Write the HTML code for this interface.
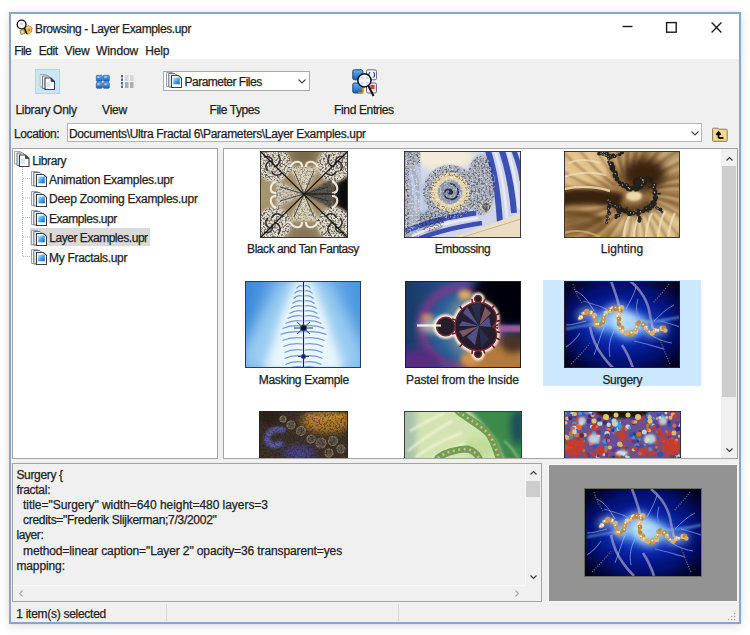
<!DOCTYPE html>
<html><head><meta charset="utf-8">
<style>
*{margin:0;padding:0;box-sizing:border-box}
html,body{width:750px;height:635px;overflow:hidden;background:#ffffff}
body{position:relative;font-family:"Liberation Sans",sans-serif;color:#1a1a1a}
.a{position:absolute}
.t{position:absolute;font-size:12px;line-height:12px;-webkit-text-stroke:0.25px #1e1e1e;white-space:nowrap;color:#1e1e1e}
svg{position:absolute;overflow:visible}
</style></head><body>
<!-- window shadow -->
<div class="a" style="left:9px;top:12px;width:732px;height:612px;box-shadow:0 2px 10px rgba(0,0,0,0.13),0 0 3px rgba(0,0,0,0.06)"></div>
<!-- window frame -->
<div class="a" style="left:9px;top:12px;width:732px;height:612px;background:#f0f0f0;border:2px solid #86a7c7"></div>
<!-- title+menu white -->
<div class="a" style="left:11px;top:14px;width:728px;height:45px;background:#ffffff"></div>
<!-- title controls -->
<svg style="left:622px;top:21px" width="12" height="12" viewBox="0 0 12 12"><path d="M0.5 5.5 H10.5" stroke="#1a1a1a" stroke-width="1.4"/></svg>
<svg style="left:665px;top:21px" width="13" height="13" viewBox="0 0 13 13"><rect x="1.6" y="1.6" width="9.6" height="9.6" fill="none" stroke="#1a1a1a" stroke-width="1.4"/></svg>
<svg style="left:711px;top:22px" width="11" height="11" viewBox="0 0 11 11"><path d="M0.6 0.6L10.4 10.4M10.4 0.6L0.6 10.4" stroke="#1a1a1a" stroke-width="1.35"/></svg>
<!-- library only button -->
<div class="a" style="left:35px;top:69px;width:25px;height:25px;background:#cce4f7;border:1px solid #b5d3ee"></div>
<!-- combobox -->
<div class="a" style="left:163px;top:71px;width:147px;height:20px;background:#fff;border:1px solid #a9a9a9"></div>
<svg style="left:298px;top:79px" width="8" height="5" viewBox="0 0 8 5"><path d="M0.5 0.5L4 4L7.5 0.5" fill="none" stroke="#444" stroke-width="1.1"/></svg>
<!-- location input -->
<div class="a" style="left:67px;top:123px;width:635px;height:19px;background:#fff;border:1px solid #b4b4b4"></div>
<svg style="left:691px;top:131px" width="8" height="5" viewBox="0 0 8 5"><path d="M0.5 0.5L4 4L7.5 0.5" fill="none" stroke="#444" stroke-width="1.1"/></svg>
<!-- tree panel -->
<div class="a" style="left:12px;top:148px;width:206px;height:311px;background:#fff;border:1px solid #a3a3a3"></div>
<div class="a" style="left:30px;top:228px;width:120px;height:18px;background:#d9d9d9"></div>
<!-- grid panel -->
<div class="a" style="left:223px;top:148px;width:515px;height:311px;background:#fff;border:1px solid #a3a3a3"></div>
<div class="a" style="left:543px;top:280px;width:158px;height:106px;background:#cce8ff"></div>
<svg width="0" height="0" style="position:absolute;left:0;top:0">
<defs>
<filter id="b1" filterUnits="userSpaceOnUse" x="-30" y="-30" width="180" height="150"><feGaussianBlur stdDeviation="1"/></filter>
<filter id="b2" filterUnits="userSpaceOnUse" x="-30" y="-30" width="180" height="150"><feGaussianBlur stdDeviation="2"/></filter>
<filter id="b3" filterUnits="userSpaceOnUse" x="-30" y="-30" width="180" height="150"><feGaussianBlur stdDeviation="3.5"/></filter>
<filter id="b5" filterUnits="userSpaceOnUse" x="-30" y="-30" width="180" height="150"><feGaussianBlur stdDeviation="5"/></filter>
<filter id="b8" filterUnits="userSpaceOnUse" x="-30" y="-30" width="180" height="150"><feGaussianBlur stdDeviation="8"/></filter>
<filter id="b05" filterUnits="userSpaceOnUse" x="-30" y="-30" width="180" height="150"><feGaussianBlur stdDeviation="0.5"/></filter>
<!-- dark speckle texture: output dark dots with alpha from noise, clipped to source alpha -->
<filter id="spk" x="0" y="0" width="100%" height="100%" color-interpolation-filters="sRGB">
 <feTurbulence type="fractalNoise" baseFrequency="0.55" numOctaves="2" seed="7" result="n"/>
 <feColorMatrix in="n" type="matrix" values="0 0 0 0 0.1  0 0 0 0 0.1  0 0 0 0 0.12  5 0 0 0 -2.3" result="d"/>
 <feComposite in="d" in2="SourceGraphic" operator="in"/>
</filter>
<filter id="spkL" x="0" y="0" width="100%" height="100%" color-interpolation-filters="sRGB">
 <feTurbulence type="fractalNoise" baseFrequency="0.5" numOctaves="2" seed="11" result="n"/>
 <feColorMatrix in="n" type="matrix" values="0 0 0 0 1  0 0 0 0 1  0 0 0 0 0.96  0 5 0 0 -2.4" result="d"/>
 <feComposite in="d" in2="SourceGraphic" operator="in"/>
</filter>
<radialGradient id="gSurg" cx="50%" cy="50%" r="65%">
 <stop offset="0" stop-color="#1038c0"/><stop offset="0.4" stop-color="#061c9c"/><stop offset="0.7" stop-color="#031070"/><stop offset="0.88" stop-color="#02063c"/><stop offset="1" stop-color="#000220"/>
</radialGradient>
<linearGradient id="gMaskH" x1="0" y1="0" x2="1" y2="0">
 <stop offset="0" stop-color="#3a88d8"/><stop offset="0.5" stop-color="#6ab0ea"/><stop offset="1" stop-color="#4a96de"/>
</linearGradient>

<symbol id="surg" viewBox="0 0 116 87">
 <rect width="116" height="87" fill="url(#gSurg)"/>
 <ellipse cx="60" cy="44" rx="44" ry="17" fill="#1a50d8" opacity="0.5" filter="url(#b8)"/>
 <ellipse cx="58" cy="42" rx="26" ry="11" fill="#78c0f8" opacity="0.75" filter="url(#b5)"/>
 <ellipse cx="60" cy="40" rx="14" ry="10" fill="#c8ecff" opacity="0.8" filter="url(#b3)"/>
 <path d="M2 48 C20 44 40 42 58 42 C80 42 100 40 116 36" stroke="#80c4ff" stroke-width="2.5" fill="none" opacity="0.55" filter="url(#b1)"/>
 <g fill="none" stroke="#8e90c4" stroke-width="2.6" opacity="0.8" filter="url(#b05)">
  <path d="M47 0 C50 8 53 16 55 25"/>
  <path d="M66 0 C76 8 84 20 86 34 C87 40 88 44 89 48"/>
  <path d="M26 46 C28 56 32 66 38 74 C42 80 46 84 49 87"/>
  <path d="M58 64 C62 70 66 78 69 87"/>
 </g>
 <g fill="none" stroke="#a8c8f8" stroke-width="1" opacity="0.6">
  <path d="M30 30 C24 20 20 14 12 10"/><path d="M40 46 C36 56 34 64 30 74"/><path d="M62 28 C66 20 70 14 72 6"/><path d="M80 48 C88 56 96 60 108 62"/><path d="M50 50 C46 58 44 66 46 76"/><path d="M90 40 C96 34 102 28 110 24"/><path d="M22 40 C14 42 8 44 2 44"/>
 </g>
 <g fill="none" stroke="#7e92d8" stroke-width="1.2" opacity="0.7">
  <path d="M19 20 C26 22 32 24 38 26 C42 28 46 30 50 34"/>
  <path d="M70 60 C80 62 92 66 100 68"/>
  <path d="M16 52 C12 58 8 62 2 66"/>
  <path d="M96 40 C104 42 110 44 116 46"/>
  <path d="M74 18 C72 24 72 30 74 36"/>
 </g>
 <g fill="none" stroke="#8a7a70" stroke-width="1.2" stroke-dasharray="1.2 1.3" opacity="0.85">
  <path d="M9 3 C11 10 14 16 18 22"/><path d="M105 3 C100 10 94 16 89 22"/>
  <path d="M7 83 C14 76 20 70 26 62"/><path d="M106 83 C102 74 99 66 96 59"/>
 </g>
 <path d="M15.5 38 C19 32 23 30 26 31.5 C30 34 32 42 34 44 C37 46 40 38 43 32 C46 28 52 26 57 27 C58 32 52 36 54 39 C57 44 57 50 60 52 C64 55 69 54 71 50 C73 46 73 42 76 42 C80 42 81 46 84 50 C87 53 92 50 96 48 L103 49" fill="none" stroke="#d8f0ff" stroke-width="10" opacity="0.5" filter="url(#b3)"/>
 
 <g><circle cx="15.4" cy="37.7" r="1.8" fill="#c89a50"/><circle cx="16.9" cy="36.4" r="2.4" fill="#e0c088"/><circle cx="18.9" cy="32.5" r="1.7" fill="#d8b070"/><circle cx="21.6" cy="31.7" r="2.5" fill="#c89a50"/><circle cx="22.9" cy="30.4" r="2.6" fill="#c89a50"/><circle cx="27.0" cy="31.3" r="2.0" fill="#c89a50"/><circle cx="26.8" cy="32.9" r="2.2" fill="#c89a50"/><circle cx="30.5" cy="34.2" r="2.5" fill="#d8b070"/><circle cx="30.0" cy="36.8" r="1.7" fill="#c89a50"/><circle cx="31.2" cy="39.4" r="1.8" fill="#c89a50"/><circle cx="32.1" cy="43.6" r="2.5" fill="#c89a50"/><circle cx="33.9" cy="43.7" r="2.8" fill="#c89a50"/><circle cx="36.4" cy="43.4" r="1.7" fill="#b88840"/><circle cx="38.6" cy="41.2" r="2.4" fill="#b88840"/><circle cx="39.3" cy="37.5" r="2.7" fill="#c89a50"/><circle cx="40.6" cy="34.4" r="1.9" fill="#c89a50"/><circle cx="41.9" cy="31.7" r="2.3" fill="#e0c088"/><circle cx="45.3" cy="30.0" r="1.9" fill="#e0c088"/><circle cx="46.0" cy="28.2" r="2.4" fill="#b88840"/><circle cx="48.7" cy="26.8" r="1.7" fill="#d8b070"/><circle cx="51.5" cy="27.2" r="2.8" fill="#b88840"/><circle cx="55.5" cy="27.3" r="2.0" fill="#c89a50"/><circle cx="57.6" cy="26.7" r="2.7" fill="#d8b070"/><circle cx="56.4" cy="29.7" r="2.3" fill="#b88840"/><circle cx="55.4" cy="32.0" r="1.7" fill="#d8b070"/><circle cx="54.4" cy="33.7" r="2.3" fill="#e0c088"/><circle cx="53.2" cy="35.5" r="2.4" fill="#e0c088"/><circle cx="55.0" cy="38.0" r="2.4" fill="#b88840"/><circle cx="54.3" cy="41.5" r="1.7" fill="#c89a50"/><circle cx="55.1" cy="43.5" r="2.2" fill="#b88840"/><circle cx="57.6" cy="46.9" r="2.7" fill="#c89a50"/><circle cx="56.8" cy="47.8" r="2.1" fill="#c89a50"/><circle cx="58.3" cy="50.3" r="2.3" fill="#e0c088"/><circle cx="62.7" cy="52.0" r="2.7" fill="#d8b070"/><circle cx="66.4" cy="54.5" r="1.7" fill="#b88840"/><circle cx="68.0" cy="52.1" r="2.8" fill="#c89a50"/><circle cx="71.6" cy="50.6" r="2.5" fill="#e0c088"/><circle cx="71.1" cy="48.9" r="1.7" fill="#c89a50"/><circle cx="72.7" cy="46.4" r="1.6" fill="#c89a50"/><circle cx="73.8" cy="42.7" r="2.6" fill="#c89a50"/><circle cx="75.1" cy="40.9" r="1.8" fill="#b88840"/><circle cx="79.5" cy="43.7" r="2.7" fill="#b88840"/><circle cx="79.4" cy="44.1" r="1.9" fill="#b88840"/><circle cx="81.8" cy="46.4" r="1.9" fill="#e0c088"/><circle cx="83.0" cy="48.6" r="1.7" fill="#c89a50"/><circle cx="85.3" cy="51.0" r="1.8" fill="#c89a50"/><circle cx="88.2" cy="52.2" r="2.5" fill="#d8b070"/><circle cx="91.3" cy="49.5" r="2.4" fill="#e0c088"/><circle cx="93.7" cy="49.6" r="1.7" fill="#c89a50"/><circle cx="93.8" cy="49.5" r="1.7" fill="#d8b070"/><circle cx="98.1" cy="47.4" r="2.6" fill="#e0c088"/><circle cx="99.9" cy="46.9" r="2.4" fill="#b88840"/><circle cx="101.3" cy="49.5" r="2.3" fill="#d8b070"/></g><g opacity="0.9"><circle cx="15.4" cy="37.1" r="0.9" fill="#fffbe8"/><circle cx="17.6" cy="35.8" r="1.1" fill="#fffbe8"/><circle cx="19.6" cy="31.9" r="0.9" fill="#fffbe8"/><circle cx="27.6" cy="30.7" r="1.0" fill="#fffbe8"/><circle cx="27.2" cy="32.3" r="1.0" fill="#fffbe8"/><circle cx="30.2" cy="36.2" r="0.9" fill="#fffbe8"/><circle cx="32.2" cy="43.0" r="0.9" fill="#fffbe8"/><circle cx="34.2" cy="43.1" r="1.1" fill="#fffbe8"/><circle cx="39.2" cy="40.6" r="0.8" fill="#fffbe8"/><circle cx="39.5" cy="36.9" r="0.6" fill="#fffbe8"/><circle cx="40.2" cy="33.8" r="0.9" fill="#fffbe8"/><circle cx="42.3" cy="31.1" r="0.7" fill="#fffbe8"/><circle cx="46.0" cy="29.4" r="0.9" fill="#fffbe8"/><circle cx="46.7" cy="27.6" r="1.0" fill="#fffbe8"/><circle cx="48.0" cy="26.2" r="0.7" fill="#fffbe8"/><circle cx="51.5" cy="26.6" r="0.7" fill="#fffbe8"/><circle cx="55.5" cy="26.7" r="1.0" fill="#fffbe8"/><circle cx="55.7" cy="29.1" r="0.9" fill="#fffbe8"/><circle cx="54.5" cy="33.1" r="0.9" fill="#fffbe8"/><circle cx="53.2" cy="34.9" r="0.9" fill="#fffbe8"/><circle cx="54.5" cy="37.4" r="0.7" fill="#fffbe8"/><circle cx="56.0" cy="47.2" r="1.0" fill="#fffbe8"/><circle cx="58.8" cy="49.7" r="0.8" fill="#fffbe8"/><circle cx="67.4" cy="51.5" r="1.1" fill="#fffbe8"/><circle cx="71.2" cy="48.3" r="0.7" fill="#fffbe8"/><circle cx="72.5" cy="45.8" r="1.0" fill="#fffbe8"/><circle cx="79.2" cy="43.5" r="1.0" fill="#fffbe8"/><circle cx="82.5" cy="45.8" r="0.8" fill="#fffbe8"/><circle cx="83.1" cy="48.0" r="0.7" fill="#fffbe8"/><circle cx="85.2" cy="50.4" r="0.9" fill="#fffbe8"/><circle cx="91.9" cy="48.9" r="0.8" fill="#fffbe8"/><circle cx="93.7" cy="49.0" r="0.6" fill="#fffbe8"/><circle cx="94.1" cy="48.9" r="0.9" fill="#fffbe8"/></g>
</symbol>

<symbol id="pastel" viewBox="0 0 116 87">
 <linearGradient id="gPasL" x1="0" y1="0" x2="1" y2="0"><stop offset="0" stop-color="#173a68"/><stop offset="0.5" stop-color="#245a8c"/><stop offset="1" stop-color="#1a3060"/></linearGradient>
 <rect width="116" height="87" fill="url(#gPasL)"/>
 <circle cx="56" cy="46" r="39" fill="none" stroke="#8a3a90" stroke-width="9" opacity="0.85" filter="url(#b3)"/>
 <ellipse cx="12" cy="82" rx="24" ry="14" fill="#5a2a80" filter="url(#b5)"/>
 <ellipse cx="104" cy="16" rx="38" ry="30" fill="#06060e" filter="url(#b5)"/>
 <ellipse cx="92" cy="78" rx="38" ry="18" fill="#b47a3a" filter="url(#b5)"/>
 <ellipse cx="108" cy="62" rx="12" ry="10" fill="#4a3028" filter="url(#b3)"/>
 <rect x="82" y="44" width="36" height="7" fill="#9a5a9a" filter="url(#b1)"/>
 <circle cx="56" cy="46" r="33" fill="#2e66a0" opacity="0.75" filter="url(#b3)"/><ellipse cx="66" cy="45" rx="26" ry="30" fill="#e8c898" opacity="0.35" filter="url(#b5)"/>
 <ellipse cx="22" cy="36" rx="6" ry="4" fill="#d88a50" opacity="0.8" filter="url(#b2)"/>
 <ellipse cx="60" cy="14" rx="7" ry="5" fill="#e0a860" filter="url(#b2)"/>
 <ellipse cx="66" cy="78" rx="10" ry="7" fill="#d09050" filter="url(#b2)"/>
 <ellipse cx="30" cy="45" rx="16" ry="7" fill="#e8e0c8" opacity="0.7" filter="url(#b3)"/>
 <path d="M87.0 45.5 L87.1 45.5 L87.3 45.5 L87.6 45.7 L88.0 45.9 L88.6 46.2 L89.1 46.7 L89.7 47.4 L90.3 48.3 L90.8 49.3 L91.2 50.6 L91.5 52.0 L91.6 53.5 L91.5 55.2 L91.2 56.9 L90.5 58.7 L89.7 60.6 L88.5 62.3 L87.0 64.0 L85.2 65.5 L83.2 66.9 L81.0 68.0 L78.5 68.8 L75.9 69.4 L73.1 69.5 L70.3 69.3 L67.5 68.8 L64.7 67.8 L62.0 66.5 L59.4 64.8 L57.1 62.8 L55.0 60.4 L53.3 57.8 L51.9 54.9 L50.8 51.9 L50.2 48.7 L50.0 45.5 L50.2 42.3 L50.8 39.1 L51.9 36.1 L53.3 33.2 L55.0 30.6 L57.1 28.2 L59.4 26.2 L62.0 24.5 L64.7 23.2 L67.5 22.2 L70.3 21.7 L73.1 21.5 L75.9 21.6 L78.5 22.2 L81.0 23.0 L83.2 24.1 L85.2 25.5 L87.0 27.0 L88.5 28.7 L89.7 30.4 L90.5 32.3 L91.2 34.1 L91.5 35.8 L91.6 37.5 L91.5 39.0 L91.2 40.4 L90.8 41.7 L90.3 42.7 L89.7 43.6 L89.1 44.3 L88.6 44.8 L88.0 45.1 L87.6 45.3 L87.3 45.5 L87.1 45.5 L87.0 45.5Z M31.5 45.5 a9.2 9.2 0 1 0 18.5 0 a9.2 9.2 0 1 0 -18.5 0Z M69.6 18.0 a3.5 3.5 0 1 0 7.0 0 a3.5 3.5 0 1 0 -7.0 0Z M69.6 73.0 a3.5 3.5 0 1 0 7.0 0 a3.5 3.5 0 1 0 -7.0 0Z" fill="#f4e6c0" stroke="#fbf2dc" stroke-width="6" stroke-linejoin="round" filter="url(#b1)"/>
 <path d="M87.3 45.5 l4.0 0.0 M89.1 46.7 l4.0 0.3 M91.2 50.6 l3.9 0.9 M91.2 56.9 l3.5 1.9 M87.0 64.0 l2.7 3.0 M78.5 68.8 l1.3 3.8 M67.5 68.8 l-0.5 4.0 M57.1 62.8 l-2.4 3.2 M50.8 51.9 l-3.8 1.2 M50.8 39.1 l-3.8 -1.2 M57.1 28.2 l-2.4 -3.2 M67.5 22.2 l-0.5 -4.0 M78.5 22.2 l1.3 -3.8 M87.0 27.0 l2.7 -3.0 M91.2 34.1 l3.5 -1.9 M91.2 40.4 l3.9 -0.9 M89.1 44.3 l4.0 -0.3 M87.3 45.5 l4.0 -0.0" stroke="#6a1a24" stroke-width="1.6"/>
 <path d="M87.0 45.5 L87.1 45.5 L87.3 45.5 L87.6 45.7 L88.0 45.9 L88.6 46.2 L89.1 46.7 L89.7 47.4 L90.3 48.3 L90.8 49.3 L91.2 50.6 L91.5 52.0 L91.6 53.5 L91.5 55.2 L91.2 56.9 L90.5 58.7 L89.7 60.6 L88.5 62.3 L87.0 64.0 L85.2 65.5 L83.2 66.9 L81.0 68.0 L78.5 68.8 L75.9 69.4 L73.1 69.5 L70.3 69.3 L67.5 68.8 L64.7 67.8 L62.0 66.5 L59.4 64.8 L57.1 62.8 L55.0 60.4 L53.3 57.8 L51.9 54.9 L50.8 51.9 L50.2 48.7 L50.0 45.5 L50.2 42.3 L50.8 39.1 L51.9 36.1 L53.3 33.2 L55.0 30.6 L57.1 28.2 L59.4 26.2 L62.0 24.5 L64.7 23.2 L67.5 22.2 L70.3 21.7 L73.1 21.5 L75.9 21.6 L78.5 22.2 L81.0 23.0 L83.2 24.1 L85.2 25.5 L87.0 27.0 L88.5 28.7 L89.7 30.4 L90.5 32.3 L91.2 34.1 L91.5 35.8 L91.6 37.5 L91.5 39.0 L91.2 40.4 L90.8 41.7 L90.3 42.7 L89.7 43.6 L89.1 44.3 L88.6 44.8 L88.0 45.1 L87.6 45.3 L87.3 45.5 L87.1 45.5 L87.0 45.5Z M31.5 45.5 a9.2 9.2 0 1 0 18.5 0 a9.2 9.2 0 1 0 -18.5 0Z M69.6 18.0 a3.5 3.5 0 1 0 7.0 0 a3.5 3.5 0 1 0 -7.0 0Z M69.6 73.0 a3.5 3.5 0 1 0 7.0 0 a3.5 3.5 0 1 0 -7.0 0Z" fill="#251c2c" stroke="#7a2a30" stroke-width="1.4"/>
 <path d="M74 45 L58 32 L62 26 Z M74 45 L84 36 L86 46 Z M74 45 L62 56 L70 64 Z M74 45 L54 45 L57 40Z" fill="#5a5a98" opacity="0.85"/><path d="M74 45 L80 26 L86 32Z M74 45 L54 50 L58 56Z" fill="#a07078" opacity="0.7"/>
 <path d="M74 45 L66 24 L76 22Z M74 45 L84 58 L76 66Z" fill="#2a3050" opacity="0.9"/>
<path d="M12 44.5 L36 44.5" stroke="#fbf6ea" stroke-width="2.2" opacity="0.95"/></symbol>

<symbol id="mask" viewBox="0 0 116 87">
 <rect width="116" height="87" fill="url(#gMaskH)"/>
 <path d="M36 -4 L82 -4 L120 70 L120 92 L-4 92 L-4 70 Z" fill="#9ccdf2" filter="url(#b8)"/>
 <path d="M50 -2 L67 -2 L100 90 L18 90 Z" fill="#e8f6fd" filter="url(#b5)"/>
 <ellipse cx="58" cy="50" rx="22" ry="30" fill="#eef8fe" opacity="0.6" filter="url(#b5)"/>
 <path d="M57.5 5 C55.1 4.0 53.0 5.2 51.5 7.5 M59.5 5 C61.9 4.0 64.0 5.2 65.5 7.5 M57.5 10 C54.3 9.0 51.5 10.2 49.5 12.5 M59.5 10 C62.7 9.0 65.5 10.2 67.5 12.5 M57.5 15 C53.9 14.0 50.8 15.2 48.5 17.5 M59.5 15 C63.1 14.0 66.2 15.2 68.5 17.5 M57.5 20 C53.5 19.0 50.0 20.2 47.5 22.5 M59.5 20 C63.5 19.0 67.0 20.2 69.5 22.5 M57.5 25 C52.7 24.0 48.5 25.2 45.5 27.5 M59.5 25 C64.3 24.0 68.5 25.2 71.5 27.5 M57.5 30 C52.3 29.0 47.8 30.2 44.5 32.5 M59.5 30 C64.7 29.0 69.2 30.2 72.5 32.5 M57.5 35 C51.5 34.0 46.2 35.2 42.5 37.5 M59.5 35 C65.5 34.0 70.8 35.2 74.5 37.5 M57.5 40 C50.7 39.0 44.8 40.2 40.5 42.5 M59.5 40 C66.3 39.0 72.2 40.2 76.5 42.5 M57.5 45 C49.5 44.0 42.5 45.2 37.5 47.5 M59.5 45 C67.5 44.0 74.5 45.2 79.5 47.5 M57.5 51 C48.7 50.0 41.0 51.2 35.5 53.5 M59.5 51 C68.3 50.0 76.0 51.2 81.5 53.5 M57.5 57 C49.5 56.0 42.5 57.2 37.5 59.5 M59.5 57 C67.5 56.0 74.5 57.2 79.5 59.5 M57.5 63 C49.9 62.0 43.2 63.2 38.5 65.5 M59.5 63 C67.1 62.0 73.8 63.2 78.5 65.5 M57.5 69 C50.3 68.0 44.0 69.2 39.5 71.5 M59.5 69 C66.7 68.0 73.0 69.2 77.5 71.5 M57.5 75 C50.3 74.0 44.0 75.2 39.5 77.5 M59.5 75 C66.7 74.0 73.0 75.2 77.5 77.5 M57.5 81 C50.7 80.0 44.8 81.2 40.5 83.5 M59.5 81 C66.3 80.0 72.2 81.2 76.5 83.5 M57.5 86 C51.5 85.0 46.2 86.2 42.5 88.5 M59.5 86 C65.5 85.0 70.8 86.2 74.5 88.5" fill="none" stroke="#1e4ab4" stroke-width="1.1" opacity="0.55" filter="url(#b05)"/>
 <path d="M58.5 0 L58.5 87" stroke="#1a2450" stroke-width="1.1"/>
 <path d="M49 47 L68 47 M53 75.5 L64 75.5 M52 41 L65 53 M65 41 L52 53" stroke="#2a3a58" stroke-width="1"/>
 <circle cx="58.5" cy="47" r="3.2" fill="#0c1230" stroke="#4a5ab0" stroke-width="1"/>
 <circle cx="58.5" cy="75.5" r="2.3" fill="#1a2250" stroke="#5060b8" stroke-width="0.8"/>
</symbol>

<symbol id="emb" viewBox="0 0 117 87">
 <rect width="117" height="87" fill="#d0d6e8"/>
 <ellipse cx="40" cy="6" rx="30" ry="14" fill="#f2ecdc" filter="url(#b3)"/>
 <g fill="#a8aebe" filter="url(#b1)">
  <rect x="0" y="0" width="16" height="87"/>
  <circle cx="46" cy="41" r="27"/>
  <ellipse cx="77" cy="34" rx="14" ry="30"/>
  <ellipse cx="26" cy="70" rx="14" ry="12"/>
 </g>
 <g fill="none" stroke="#b8c8ec" stroke-width="3" opacity="0.9">
  <path d="M12 14 C18 30 20 46 20 62"/><path d="M6 20 C10 34 12 48 12 62"/>
 </g>
 <g fill="none" stroke="#3c50b4" stroke-linecap="butt">
  <path d="M84 0 C90 18 94 40 96 72" stroke-width="6"/>
  <path d="M98 0 C104 18 108 36 110 62" stroke-width="6"/>
  <path d="M110 0 C114 10 117 20 118 30" stroke-width="5"/>
  <path d="M2 80 C20 72 42 66 72 62" stroke-width="5"/>
  <path d="M14 88 C34 80 52 76 78 72" stroke-width="4.5"/>
 </g>
 <g fill="none" stroke="#e8ecfa" stroke-width="2.5" opacity="0.95">
  <path d="M91 0 C97 18 101 40 103 68"/><path d="M104 0 C110 18 113 36 115 58"/>
  <path d="M8 85 C26 76 46 70 74 67"/>
 </g>
 <path d="M48 87 L117 62 L117 87 Z" fill="#ecdec2"/>
 <path d="M56 87 L117 68" stroke="#c0a888" stroke-width="0.8"/>
 <circle cx="46" cy="41" r="16" fill="none" stroke="#e4d2a8" stroke-width="7"/>
 <circle cx="46" cy="41" r="11.5" fill="#8a92a8"/>
 <path d="M46 33 C53 33 56 40 53 45 C50 50 43 49 41 45 C39 40 43 37 47 39 C49 40 49 43 46 43" fill="none" stroke="#1e2848" stroke-width="1.6"/>
 <circle cx="46" cy="41" r="2.5" fill="#1e2446"/>
 <circle cx="82" cy="56" r="5" fill="#6c7288" stroke="#d8c8a4" stroke-width="2"/>
 <g filter="url(#spk)" opacity="0.5">
  <rect x="0" y="0" width="5" height="87"/>
  <rect x="0" y="0" width="16" height="14"/>
  <path d="M46 14 A27 27 0 1 1 45.9 14 Z M46 25 A16 16 0 1 0 46.1 25 Z" fill-rule="evenodd"/>
  <ellipse cx="77" cy="34" rx="14" ry="30"/>
  <ellipse cx="26" cy="70" rx="14" ry="10"/>
 </g>
 <g filter="url(#spkL)" opacity="0.45">
  <rect x="0" y="0" width="16" height="87"/>
  <circle cx="46" cy="41" r="27"/>
  <ellipse cx="77" cy="34" rx="14" ry="30"/>
 </g>
</symbol>

<symbol id="light" viewBox="0 0 116 87">
 <rect width="116" height="87" fill="#a88050"/>
 <ellipse cx="14" cy="12" rx="36" ry="24" fill="#e2c088" filter="url(#b5)"/>
 <ellipse cx="88" cy="76" rx="36" ry="18" fill="#dcc08c" filter="url(#b5)"/>
 <ellipse cx="108" cy="8" rx="16" ry="12" fill="#b89868" filter="url(#b3)"/>
 <path d="M89.3 43.7 Q123.5 47.6 155.5 64.9 M86.0 48.0 Q119.8 59.9 148.4 84.5 M85.8 51.6 Q116.4 69.5 139.4 98.8 M84.6 56.6 Q109.4 80.9 124.1 114.4 M83.4 61.4 Q102.0 89.2 109.2 124.0 M77.0 60.0 Q90.8 93.2 91.4 130.9 M73.8 61.2 Q81.2 96.5 74.8 133.7 M70.1 67.2 Q68.7 100.6 53.8 132.9 M65.8 66.7 Q58.0 99.5 37.3 128.6 M61.9 61.5 Q46.0 93.6 18.2 118.9 M57.2 61.6 Q35.3 88.6 3.3 106.6 M54.4 59.1 Q27.9 81.9 -6.9 93.9 M49.0 57.7 Q19.5 73.3 -15.8 76.8 M45.9 53.3 Q13.9 61.8 -21.0 57.2 M44.6 48.4 Q11.4 50.1 -21.8 38.4 M48.7 43.8 Q13.6 38.9 -18.9 20.6 M50.0 40.4 Q15.9 29.2 -13.2 5.1 M46.9 35.2 Q17.8 18.2 -4.0 -10.0 M49.5 30.9 Q24.8 7.9 9.7 -24.6 M55.9 30.3 Q35.4 0.8 26.7 -36.0 M56.5 23.0 Q44.7 -8.0 45.7 -43.2 M62.1 26.5 Q54.8 -8.6 61.2 -45.7 M65.5 23.7 Q65.6 -11.2 79.4 -45.3 M69.8 20.9 Q76.9 -11.9 96.9 -41.2 M74.7 24.9 Q90.4 -6.4 117.9 -30.9 M78.9 25.4 Q100.1 -1.7 131.4 -19.8 M82.5 28.7 Q109.3 6.9 144.2 -3.9 M83.8 32.1 Q114.4 14.6 151.1 9.4 M84.5 36.7 Q119.0 26.2 156.8 29.1 M89.1 38.9 Q123.1 35.2 158.0 45.1" fill="none" stroke="#f0d8a4" stroke-width="2.4" opacity="0.4" filter="url(#b1)"/>
 <path d="M89.5 46.1 Q122.9 53.8 152.6 74.6 M90.1 50.5 Q120.8 64.2 145.4 89.9 M85.7 54.9 Q112.7 76.8 130.5 108.8 M81.9 56.8 Q105.1 83.9 117.3 119.3 M81.2 62.2 Q97.2 92.0 101.1 127.7 M76.5 63.8 Q85.7 96.9 81.8 132.9 M71.9 64.5 Q73.9 99.1 62.4 133.8 M67.7 67.5 Q62.7 100.5 44.6 130.9 M63.2 67.1 Q52.0 98.5 28.4 124.8 M60.5 61.8 Q42.9 92.5 13.7 115.8 M56.2 59.9 Q32.0 85.4 -1.7 100.9 M52.1 58.5 Q24.0 78.3 -11.3 86.5 M47.5 55.6 Q16.4 67.8 -18.9 67.4 M49.9 49.7 Q14.9 56.1 -21.9 48.8 M46.7 45.7 Q12.3 44.0 -20.7 28.8 M46.7 41.3 Q13.4 32.7 -15.8 11.1 M45.4 36.1 Q15.9 21.0 -7.0 -5.7 M51.6 34.6 Q23.0 13.3 3.3 -18.5 M54.7 31.5 Q31.7 3.9 19.8 -32.0 M56.5 27.7 Q40.0 -3.3 35.9 -40.1 M58.2 22.1 Q49.1 -9.8 52.9 -44.7 M64.3 26.2 Q61.3 -9.7 72.2 -45.9 M68.1 25.1 Q72.7 -10.3 90.8 -43.1 M72.7 20.7 Q83.6 -10.7 107.0 -37.1 M76.5 24.7 Q94.5 -4.9 123.6 -26.7 M80.8 26.5 Q104.5 1.7 137.5 -13.2 M84.5 29.0 Q112.5 9.7 147.5 1.9 M86.6 34.0 Q118.8 21.6 155.3 22.2 M88.4 37.3 Q122.2 30.8 157.8 37.8 M86.3 42.2 Q122.2 43.1 156.9 57.7" fill="none" stroke="#4a3014" stroke-width="2.2" opacity="0.35" filter="url(#b1)"/>
 <path d="M-6 48 C12 44 34 44 58 50" stroke="#38200c" stroke-width="15" fill="none" filter="url(#b2)"/>
 <path d="M-2 62 C12 60 26 64 40 70" stroke="#5a3a18" stroke-width="5" fill="none" opacity="0.8" filter="url(#b2)"/><ellipse cx="20" cy="74" rx="22" ry="8" fill="#5a3a18" opacity="0.55" filter="url(#b3)"/><path d="M0 82 C12 78 24 80 36 86" stroke="#d8b880" stroke-width="2" fill="none" opacity="0.7" filter="url(#b05)"/>
 <path d="M0 38 C14 35 30 35 46 40" stroke="#f0d8a8" stroke-width="2.4" fill="none" opacity="0.9" filter="url(#b05)"/><path d="M0 26 C12 22 26 20 42 24" stroke="#f4e0b8" stroke-width="2" fill="none" opacity="0.7" filter="url(#b05)"/><path d="M4 12 C14 8 24 8 36 12" stroke="#f4e0b8" stroke-width="2" fill="none" opacity="0.7" filter="url(#b05)"/>
 <ellipse cx="80" cy="24" rx="22" ry="17" fill="#3a2410" filter="url(#b5)"/>
 <path d="M56 56 C66 62 80 60 88 50" stroke="#3e2810" stroke-width="8" fill="none" filter="url(#b3)"/>
 <g fill="none" stroke="#f4e0b8" stroke-width="2.2" opacity="0.8" filter="url(#b05)">
  <path d="M60 87 C60 78 62 70 66 64"/><path d="M70 87 C70 78 72 70 76 64"/><path d="M82 87 C82 78 84 70 88 62"/><path d="M94 87 C95 76 97 68 101 60"/><path d="M104 87 C105 78 107 70 111 62"/>
 </g>
 <ellipse cx="70" cy="45" rx="8" ry="5" fill="#eed8a8" filter="url(#b1)"/>
 <g fill="#24201c"><circle cx="41.3" cy="0.4" r="2.6"/><circle cx="42.9" cy="2.5" r="2.1"/><circle cx="44.4" cy="4.5" r="2.1"/><circle cx="45.0" cy="6.8" r="2.2"/><circle cx="45.0" cy="11.0" r="1.8"/><circle cx="47.2" cy="13.2" r="2.8"/><circle cx="48.4" cy="17.0" r="2.9"/><circle cx="49.3" cy="19.7" r="2.0"/><circle cx="51.5" cy="21.8" r="2.2"/><circle cx="51.3" cy="24.2" r="2.7"/><circle cx="53.1" cy="28.2" r="2.4"/><circle cx="55.5" cy="31.2" r="1.9"/><circle cx="58.1" cy="33.0" r="2.2"/><circle cx="59.2" cy="34.9" r="2.0"/><circle cx="62.3" cy="34.9" r="2.9"/><circle cx="64.3" cy="36.8" r="2.9"/><circle cx="66.1" cy="37.9" r="2.6"/><circle cx="69.1" cy="36.8" r="2.0"/><circle cx="70.3" cy="36.8" r="2.6"/><circle cx="73.0" cy="37.6" r="2.8"/><circle cx="76.2" cy="35.9" r="2.5"/><circle cx="77.2" cy="34.8" r="2.1"/><circle cx="78.3" cy="33.2" r="2.1"/><circle cx="80.0" cy="31.4" r="2.8"/><circle cx="79.3" cy="29.4" r="1.9"/><circle cx="76.5" cy="27.0" r="2.0"/><circle cx="75.3" cy="28.5" r="2.7"/><circle cx="72.0" cy="28.6" r="1.9"/><circle cx="71.4" cy="31.1" r="2.5"/><circle cx="71.7" cy="31.4" r="2.7"/><circle cx="74.5" cy="34.2" r="2.4"/><circle cx="76.5" cy="34.9" r="2.2"/><circle cx="84.1" cy="26.1" r="1.9"/><circle cx="87.2" cy="28.2" r="2.2"/><circle cx="87.3" cy="30.4" r="1.9"/><circle cx="90.0" cy="34.0" r="2.5"/><circle cx="89.7" cy="36.1" r="2.6"/><circle cx="91.1" cy="40.6" r="2.3"/><circle cx="90.6" cy="42.3" r="2.2"/><circle cx="91.5" cy="46.5" r="2.6"/><circle cx="91.1" cy="49.1" r="2.1"/><circle cx="89.3" cy="51.7" r="2.8"/><circle cx="87.4" cy="54.8" r="2.7"/><circle cx="85.2" cy="56.7" r="3.0"/><circle cx="81.9" cy="57.9" r="2.6"/><circle cx="79.0" cy="60.2" r="2.0"/><circle cx="75.6" cy="60.8" r="2.1"/><circle cx="73.0" cy="60.8" r="2.0"/><circle cx="69.5" cy="62.2" r="2.2"/><circle cx="65.7" cy="62.3" r="2.9"/><circle cx="61.4" cy="60.0" r="2.5"/><circle cx="58.2" cy="58.9" r="2.3"/><circle cx="55.5" cy="58.6" r="2.8"/><circle cx="55.0" cy="55.8" r="2.5"/><circle cx="52.6" cy="55.7" r="2.4"/><circle cx="50.4" cy="54.0" r="2.6"/><circle cx="48.3" cy="53.4" r="2.2"/><circle cx="46.6" cy="52.1" r="2.4"/><circle cx="45.0" cy="50.5" r="2.1"/><circle cx="43.7" cy="48.7" r="2.4"/></g><path d="M44.8 7.7 l4.9 -1.8 M48.0 16.1 l3.1 -1.3 M52.3 25.0 l-2.7 1.4 M57.8 32.3 l-2.7 2.6 M64.2 36.5 l-1.4 2.9 M71.2 37.5 l0.1 3.1 M77.6 34.8 l-2.6 -3.2 M79.0 28.8 l4.3 -1.2 M73.0 28.7 l2.4 5.0 M73.9 33.6 l2.9 -3.4 M89.5 34.1 l-5.0 2.6 M91.5 43.0 l5.3 -0.4 M89.6 51.5 l3.2 1.3 M82.6 58.1 l2.1 3.3 M72.8 61.2 l0.8 4.0 M62.4 60.7 l0.8 -4.5 M54.3 56.8 l-2.0 2.8 M49.1 52.8 l2.2 -2.7 M44.3 48.3 l-2.6 2.6" stroke="#2a2420" stroke-width="1.6" fill="none"/><g fill="#d8ccb8" opacity="0.8"><circle cx="40.8" cy="1.0" r="0.8"/><circle cx="42.7" cy="2.6" r="0.5"/><circle cx="45.4" cy="5.0" r="0.9"/><circle cx="44.2" cy="7.7" r="0.6"/><circle cx="45.4" cy="10.9" r="0.6"/><circle cx="46.6" cy="13.5" r="0.8"/><circle cx="51.3" cy="22.8" r="0.7"/><circle cx="58.5" cy="33.9" r="0.7"/><circle cx="62.8" cy="33.9" r="0.6"/><circle cx="64.4" cy="36.7" r="0.7"/><circle cx="65.6" cy="37.7" r="0.8"/><circle cx="77.8" cy="34.1" r="0.7"/><circle cx="79.3" cy="31.2" r="0.6"/><circle cx="78.9" cy="29.0" r="0.9"/><circle cx="76.9" cy="27.1" r="0.5"/><circle cx="90.3" cy="33.8" r="0.7"/><circle cx="89.3" cy="36.2" r="0.7"/><circle cx="90.6" cy="41.4" r="0.8"/><circle cx="86.8" cy="54.8" r="0.7"/><circle cx="82.1" cy="57.3" r="0.5"/><circle cx="76.4" cy="60.7" r="0.7"/><circle cx="72.5" cy="60.2" r="0.9"/><circle cx="69.7" cy="62.0" r="0.7"/><circle cx="66.7" cy="61.7" r="0.6"/><circle cx="55.8" cy="56.3" r="0.8"/><circle cx="53.0" cy="56.0" r="0.6"/><circle cx="51.1" cy="54.4" r="0.6"/><circle cx="47.6" cy="53.6" r="0.6"/><circle cx="46.9" cy="52.5" r="0.7"/><circle cx="44.7" cy="50.6" r="0.8"/><circle cx="44.4" cy="49.3" r="0.9"/></g>
<g fill="#26221e"><circle cx="46.1" cy="50.3" r="2.0"/><circle cx="46.0" cy="52.6" r="2.1"/><circle cx="45.7" cy="54.1" r="1.7"/><circle cx="45.2" cy="55.8" r="2.1"/><circle cx="44.4" cy="57.7" r="1.7"/><circle cx="44.7" cy="60.7" r="1.6"/><circle cx="45.1" cy="62.6" r="1.9"/><circle cx="43.0" cy="65.8" r="1.5"/><circle cx="44.4" cy="67.7" r="1.3"/><circle cx="42.8" cy="69.1" r="1.2"/><circle cx="42.6" cy="71.8" r="1.4"/><circle cx="35.1" cy="2.7" r="1.9"/><circle cx="37.1" cy="2.4" r="1.3"/><circle cx="38.9" cy="3.5" r="1.4"/><circle cx="42.2" cy="4.4" r="1.7"/><circle cx="44.1" cy="5.5" r="1.5"/><circle cx="46.2" cy="4.8" r="2.0"/><circle cx="49.3" cy="3.9" r="1.7"/><circle cx="50.5" cy="5.3" r="1.9"/><circle cx="53.2" cy="4.1" r="1.2"/><circle cx="55.8" cy="3.5" r="1.7"/><circle cx="58.0" cy="1.5" r="2.1"/><circle cx="74.0" cy="59.0" r="1.6"/><circle cx="73.7" cy="61.0" r="1.4"/><circle cx="74.5" cy="63.2" r="1.8"/><circle cx="75.4" cy="66.1" r="1.6"/><circle cx="75.7" cy="67.9" r="2.0"/><circle cx="75.3" cy="69.7" r="1.8"/><circle cx="75.2" cy="70.0" r="1.5"/><circle cx="56.1" cy="57.4" r="1.4"/><circle cx="54.7" cy="60.6" r="2.0"/><circle cx="56.1" cy="61.9" r="1.2"/><circle cx="54.2" cy="64.6" r="2.0"/><circle cx="52.6" cy="64.8" r="2.0"/><circle cx="52.0" cy="66.6" r="1.6"/><circle cx="88.5" cy="54.7" r="2.2"/><circle cx="90.5" cy="53.9" r="1.2"/><circle cx="91.8" cy="55.5" r="1.3"/><circle cx="93.0" cy="56.9" r="1.6"/><circle cx="94.1" cy="57.4" r="1.3"/><circle cx="96.4" cy="58.6" r="2.0"/><circle cx="98.0" cy="61.1" r="1.4"/></g><g fill="#d8ccb8" opacity="0.7"><circle cx="46.1" cy="50.3" r="0.6"/><circle cx="46.0" cy="52.6" r="0.6"/><circle cx="44.4" cy="57.7" r="0.6"/><circle cx="45.1" cy="62.6" r="0.6"/><circle cx="43.0" cy="65.8" r="0.6"/><circle cx="44.4" cy="67.7" r="0.6"/><circle cx="42.6" cy="71.8" r="0.6"/><circle cx="37.1" cy="2.4" r="0.6"/><circle cx="38.9" cy="3.5" r="0.6"/><circle cx="42.2" cy="4.4" r="0.6"/><circle cx="44.1" cy="5.5" r="0.6"/><circle cx="46.2" cy="4.8" r="0.6"/><circle cx="50.5" cy="5.3" r="0.6"/><circle cx="53.2" cy="4.1" r="0.6"/><circle cx="54.2" cy="64.6" r="0.6"/><circle cx="91.8" cy="55.5" r="0.6"/><circle cx="93.0" cy="56.9" r="0.6"/><circle cx="94.1" cy="57.4" r="0.6"/><circle cx="98.0" cy="61.1" r="0.6"/></g></symbol>

<symbol id="bt" viewBox="0 0 88 87">
 <rect width="88" height="87" fill="#a08e6c"/>
 <ellipse cx="44" cy="4" rx="14" ry="9" fill="#7a6a4c" filter="url(#b3)"/>
 <ellipse cx="44" cy="84" rx="14" ry="9" fill="#86765a" filter="url(#b3)"/>
 <ellipse cx="3" cy="44" rx="7" ry="14" fill="#a8966e" filter="url(#b3)"/>
 <ellipse cx="86" cy="44" rx="13" ry="20" fill="#0c0c0c" filter="url(#b3)"/>
 <g fill="#e2dacb" filter="url(#b1)">
  <circle cx="14" cy="14" r="17"/><circle cx="74" cy="14" r="17"/><circle cx="14" cy="73" r="17"/><circle cx="74" cy="73" r="17"/>
 </g>
 <path d="M44 43 L28 16 L60 16 Z" fill="#dcd2b8" filter="url(#b1)"/>
 <path d="M44 43 L28 70 L60 70 Z" fill="#dcd2b8" filter="url(#b1)"/>
 <path d="M44 43 L16 28 L16 58 Z" fill="#d0c8b4" filter="url(#b1)"/>
 <path d="M44 43 L72 28 L72 58 Z" fill="#5a5650" filter="url(#b1)"/>
 <g fill="none" stroke="#1a1814" stroke-width="1.5" opacity="0.85">
  <path d="M4 6 C10 4 14 8 12 14 M8 20 C4 16 6 10 12 10 M18 4 C22 8 20 14 14 16 M22 22 C18 26 12 24 12 20"/>
  <path d="M84 6 C78 4 74 8 76 14 M80 20 C84 16 82 10 76 10 M70 4 C66 8 68 14 74 16 M66 22 C70 26 76 24 76 20"/>
  <path d="M4 81 C10 83 14 79 12 73 M8 67 C4 71 6 77 12 77 M18 83 C22 79 20 73 14 71 M22 65 C18 61 12 63 12 67"/>
  <path d="M84 81 C78 83 74 79 76 73 M80 67 C84 71 82 77 76 77 M70 83 C66 79 68 73 74 71 M66 65 C70 61 76 63 76 67"/>
 </g>
 <g filter="url(#spk)" opacity="0.6">
  <circle cx="14" cy="14" r="17"/><circle cx="74" cy="14" r="17"/><circle cx="14" cy="73" r="17"/><circle cx="74" cy="73" r="17"/>
 </g>
 <g filter="url(#spk)" opacity="0.35">
  <path d="M44 43 L28 16 L60 16 Z M44 43 L28 70 L60 70 Z M44 43 L16 28 L16 58 Z M44 43 L72 28 L72 58 Z"/>
 </g>
 <g fill="none" stroke="#f8f4ea" stroke-width="2.2" opacity="0.9" filter="url(#b05)">
  <path d="M30 16 C34 9 42 9 42 16"/><path d="M58 16 C54 9 46 9 46 16"/>
  <path d="M30 71 C34 78 42 78 42 71"/><path d="M58 71 C54 78 46 78 46 71"/>
  <path d="M16 30 C9 34 9 42 16 42"/><path d="M16 57 C9 53 9 45 16 45"/>
  <path d="M72 30 C79 34 79 42 72 42"/><path d="M72 57 C79 53 79 45 72 45"/>
 </g>
 <g fill="none" stroke="#2a2a28" stroke-width="1" opacity="0.8">
  <path d="M44 43 L34 20 M44 43 L54 20 M44 43 L34 66 M44 43 L54 66 M44 43 L20 36 M44 43 L20 50 M44 43 L68 36 M44 43 L68 50"/>
 </g>
 <g fill="none" stroke="#1a1610" stroke-width="1.1">
  <path d="M1 1 L87 86"/><path d="M87 1 L1 86"/><path d="M44 43 L74 43"/>
 </g>
</symbol>

<symbol id="r3a" viewBox="0 0 89 47">
 <rect width="89" height="47" fill="#3e3228"/>
 <ellipse cx="68" cy="10" rx="26" ry="12" fill="#b07a2c" filter="url(#b3)"/>
 <path d="M48 4 C58 10 70 8 86 4" stroke="#d09a40" stroke-width="3" fill="none" opacity="0.7" filter="url(#b1)"/>
 <ellipse cx="10" cy="6" rx="14" ry="8" fill="#2a2018" filter="url(#b3)"/>
 <path d="M26 20 C18 16 8 20 8 28 C8 34 16 36 24 32" stroke="#5c5aa4" stroke-width="6" fill="none" filter="url(#b1)"/>
 <ellipse cx="40" cy="42" rx="16" ry="7" fill="#4a4490" filter="url(#b3)"/>
 <g fill="#5e5448" stroke="#8a7a60" stroke-width="1.2">
  <circle cx="32" cy="14" r="4"/><circle cx="42" cy="20" r="4.5"/><circle cx="52" cy="28" r="4"/><circle cx="62" cy="32" r="5"/><circle cx="74" cy="30" r="4.5"/><circle cx="82" cy="38" r="4"/><circle cx="70" cy="42" r="4"/><circle cx="24" cy="8" r="3"/>
 </g>
 <rect width="89" height="47" fill="#000" filter="url(#spk)" opacity="0.45"/>
</symbol>

<symbol id="r3b" viewBox="0 0 118 47">
 <rect width="118" height="47" fill="#d4e4b0"/>
 <rect x="-4" y="-4" width="16" height="55" fill="#a8c0ac" filter="url(#b3)"/>
 <g fill="none" stroke="#f2f6dc" stroke-width="2.2" opacity="0.9" filter="url(#b1)">
  <path d="M4 40 C16 30 30 20 48 10"/><path d="M12 46 C26 36 40 28 58 22"/><path d="M6 20 C16 14 28 8 40 2"/><path d="M30 46 C40 40 50 36 62 32"/>
 </g>
 <path d="M62 -4 L122 -4 L122 50 L100 50 C96 36 86 20 62 -4 Z" fill="#3e8a4c" filter="url(#b2)"/>
 <ellipse cx="114" cy="16" rx="8" ry="18" fill="#1a5058" filter="url(#b3)"/>
 <path d="M100 30 C106 34 110 40 114 47" stroke="#a8d0a0" stroke-width="2" fill="none" opacity="0.7" filter="url(#b1)"/>
 <ellipse cx="76" cy="36" rx="16" ry="10" fill="#c0dc98" filter="url(#b3)"/>
 <g fill="none" stroke="#6aa050" stroke-width="7" stroke-linecap="round">
  <path d="M54 0 C64 8 76 14 84 22 C90 30 92 38 95 47"/><path d="M34 47 C40 42 52 38 64 38 C70 40 73 43 75 47"/>
 </g>
 <g fill="none" stroke="#e4b098" stroke-width="2.6" stroke-dasharray="2 3.5">
  <path d="M54 0 C64 8 76 14 84 22 C90 30 92 38 95 47"/><path d="M34 47 C40 42 52 38 64 38 C70 40 73 43 75 47"/>
 </g>
</symbol>

<symbol id="r3c" viewBox="0 0 117 47">
 <rect width="117" height="47" fill="#6a5090"/>
 <g opacity="0.92"><circle cx="72.9" cy="34.9" r="2.5" fill="#38a0d8"/><circle cx="86.6" cy="43.3" r="1.9" fill="#d03a24"/><circle cx="110.4" cy="30.5" r="1.4" fill="#e07030"/><circle cx="54.9" cy="11.6" r="2.0" fill="#c8e0dc"/><circle cx="1.5" cy="10.2" r="2.5" fill="#2a50b8"/><circle cx="89.6" cy="7.5" r="1.4" fill="#38a0d8"/><circle cx="72.2" cy="6.0" r="2.4" fill="#d03a24"/><circle cx="24.5" cy="10.1" r="2.4" fill="#3a2a70"/><circle cx="33.8" cy="45.2" r="2.1" fill="#c8e0dc"/><circle cx="24.0" cy="44.2" r="2.6" fill="#5a3a90"/><circle cx="104.6" cy="14.0" r="1.4" fill="#2a50b8"/><circle cx="17.0" cy="3.1" r="2.0" fill="#2a50b8"/><circle cx="0.4" cy="31.9" r="1.6" fill="#2a50b8"/><circle cx="95.8" cy="22.6" r="1.9" fill="#2a50b8"/><circle cx="82.4" cy="2.7" r="1.2" fill="#3a2a70"/><circle cx="87.7" cy="39.7" r="2.3" fill="#d03a24"/><circle cx="42.8" cy="27.2" r="1.3" fill="#d03a24"/><circle cx="21.2" cy="44.9" r="2.3" fill="#d03a24"/><circle cx="108.8" cy="44.3" r="1.7" fill="#2a50b8"/><circle cx="61.4" cy="36.5" r="2.2" fill="#d03a24"/><circle cx="93.3" cy="40.4" r="2.5" fill="#d03a24"/><circle cx="10.7" cy="16.0" r="2.5" fill="#c8e0dc"/><circle cx="39.8" cy="43.4" r="1.6" fill="#c8e0dc"/><circle cx="37.1" cy="8.3" r="1.4" fill="#d03a24"/><circle cx="80.6" cy="46.8" r="1.3" fill="#d03a24"/><circle cx="115.4" cy="25.1" r="1.5" fill="#e8c060"/><circle cx="69.5" cy="38.8" r="1.8" fill="#e8c060"/><circle cx="6.5" cy="43.1" r="1.9" fill="#d03a24"/><circle cx="98.1" cy="6.1" r="2.5" fill="#38a0d8"/><circle cx="73.8" cy="37.0" r="1.8" fill="#d03a24"/><circle cx="17.5" cy="39.7" r="1.8" fill="#2a50b8"/><circle cx="116.9" cy="40.1" r="1.8" fill="#3a2a70"/><circle cx="57.1" cy="34.3" r="1.6" fill="#e8c060"/><circle cx="47.2" cy="6.9" r="2.6" fill="#2a50b8"/><circle cx="112.3" cy="29.5" r="1.7" fill="#c8e0dc"/><circle cx="10.4" cy="12.8" r="2.4" fill="#38a0d8"/><circle cx="42.3" cy="36.9" r="2.2" fill="#38a0d8"/><circle cx="77.7" cy="35.7" r="2.2" fill="#2a50b8"/><circle cx="32.9" cy="22.8" r="2.2" fill="#38a0d8"/><circle cx="34.4" cy="44.4" r="2.0" fill="#5a3a90"/><circle cx="1.4" cy="25.7" r="2.1" fill="#2a50b8"/><circle cx="54.2" cy="38.4" r="2.3" fill="#5a3a90"/><circle cx="40.7" cy="30.3" r="2.4" fill="#38a0d8"/><circle cx="41.0" cy="39.6" r="2.2" fill="#e07030"/><circle cx="114.2" cy="45.0" r="1.9" fill="#c8e0dc"/><circle cx="19.4" cy="39.3" r="1.9" fill="#e07030"/><circle cx="80.9" cy="33.8" r="1.4" fill="#38a0d8"/><circle cx="91.3" cy="27.3" r="1.8" fill="#5a3a90"/><circle cx="73.0" cy="36.4" r="2.2" fill="#5a3a90"/><circle cx="3.2" cy="7.5" r="2.1" fill="#e8c060"/><circle cx="25.6" cy="32.2" r="1.3" fill="#5a3a90"/><circle cx="55.2" cy="10.6" r="1.4" fill="#d03a24"/><circle cx="37.1" cy="8.5" r="1.2" fill="#d03a24"/><circle cx="54.4" cy="17.9" r="2.0" fill="#c8e0dc"/><circle cx="27.8" cy="42.4" r="1.8" fill="#d03a24"/><circle cx="32.6" cy="19.3" r="2.4" fill="#d03a24"/><circle cx="43.7" cy="1.7" r="1.3" fill="#c8e0dc"/><circle cx="63.8" cy="16.0" r="2.5" fill="#c8e0dc"/><circle cx="95.8" cy="19.7" r="2.1" fill="#38a0d8"/><circle cx="43.2" cy="6.7" r="2.0" fill="#c8e0dc"/><circle cx="112.0" cy="45.5" r="1.7" fill="#c8e0dc"/><circle cx="104.5" cy="0.0" r="2.0" fill="#d03a24"/><circle cx="72.0" cy="6.6" r="2.4" fill="#5a3a90"/><circle cx="44.0" cy="20.3" r="1.6" fill="#2a50b8"/><circle cx="113.8" cy="17.8" r="2.5" fill="#3a2a70"/><circle cx="69.7" cy="12.2" r="1.9" fill="#3a2a70"/><circle cx="48.6" cy="15.0" r="1.9" fill="#3a2a70"/><circle cx="33.5" cy="22.4" r="2.1" fill="#d03a24"/><circle cx="51.9" cy="13.8" r="2.4" fill="#38a0d8"/><circle cx="1.5" cy="25.0" r="2.5" fill="#2a50b8"/><circle cx="91.5" cy="11.5" r="1.4" fill="#2a50b8"/><circle cx="115.7" cy="13.8" r="1.9" fill="#c8e0dc"/><circle cx="75.5" cy="28.4" r="1.4" fill="#38a0d8"/><circle cx="89.0" cy="14.1" r="1.7" fill="#c8e0dc"/><circle cx="34.7" cy="24.9" r="1.7" fill="#e8c060"/><circle cx="87.2" cy="27.8" r="1.6" fill="#d03a24"/><circle cx="53.3" cy="43.1" r="2.0" fill="#e07030"/><circle cx="1.7" cy="36.6" r="2.0" fill="#e8c060"/><circle cx="82.9" cy="29.7" r="2.5" fill="#e8c060"/><circle cx="45.1" cy="18.4" r="1.5" fill="#e07030"/><circle cx="34.7" cy="39.0" r="2.4" fill="#d03a24"/><circle cx="81.3" cy="20.3" r="2.3" fill="#2a50b8"/><circle cx="106.5" cy="6.7" r="2.0" fill="#e8c060"/><circle cx="58.2" cy="15.5" r="2.0" fill="#d03a24"/><circle cx="95.0" cy="3.2" r="2.3" fill="#2a50b8"/><circle cx="92.6" cy="31.2" r="2.2" fill="#d03a24"/><circle cx="114.5" cy="46.9" r="1.3" fill="#5a3a90"/><circle cx="98.5" cy="10.3" r="2.5" fill="#5a3a90"/><circle cx="83.4" cy="6.3" r="2.5" fill="#2a50b8"/><circle cx="17.5" cy="28.7" r="1.4" fill="#e8c060"/><circle cx="72.8" cy="2.0" r="1.7" fill="#d03a24"/><circle cx="8.4" cy="2.7" r="2.2" fill="#c8e0dc"/><circle cx="102.8" cy="6.3" r="1.6" fill="#e8c060"/><circle cx="70.2" cy="23.0" r="1.7" fill="#3a2a70"/><circle cx="6.5" cy="32.8" r="2.1" fill="#d03a24"/><circle cx="59.2" cy="42.8" r="2.1" fill="#c8e0dc"/><circle cx="30.8" cy="25.9" r="2.3" fill="#2a50b8"/><circle cx="60.5" cy="6.3" r="1.7" fill="#2a50b8"/><circle cx="86.2" cy="8.4" r="2.1" fill="#5a3a90"/><circle cx="10.0" cy="31.4" r="1.4" fill="#d03a24"/><circle cx="69.5" cy="11.2" r="1.9" fill="#e07030"/><circle cx="37.8" cy="37.4" r="2.2" fill="#d03a24"/><circle cx="6.3" cy="7.1" r="2.2" fill="#3a2a70"/><circle cx="26.1" cy="5.5" r="2.1" fill="#3a2a70"/><circle cx="96.0" cy="6.6" r="1.7" fill="#c8e0dc"/><circle cx="27.5" cy="15.7" r="1.7" fill="#c8e0dc"/><circle cx="45.1" cy="6.4" r="2.1" fill="#38a0d8"/><circle cx="94.1" cy="20.4" r="1.9" fill="#e07030"/><circle cx="69.3" cy="26.9" r="1.8" fill="#38a0d8"/><circle cx="11.3" cy="1.6" r="1.3" fill="#d03a24"/><circle cx="104.0" cy="22.6" r="1.2" fill="#38a0d8"/><circle cx="55.0" cy="41.8" r="1.8" fill="#c8e0dc"/><circle cx="54.5" cy="4.7" r="1.4" fill="#d03a24"/><circle cx="43.8" cy="18.1" r="1.4" fill="#e07030"/><circle cx="29.7" cy="13.0" r="1.6" fill="#d03a24"/><circle cx="27.5" cy="22.7" r="2.5" fill="#d03a24"/><circle cx="43.2" cy="44.1" r="2.1" fill="#5a3a90"/><circle cx="55.2" cy="44.4" r="2.1" fill="#d03a24"/><circle cx="34.1" cy="31.7" r="1.4" fill="#38a0d8"/><circle cx="23.5" cy="1.2" r="1.3" fill="#2a50b8"/><circle cx="46.9" cy="45.8" r="1.6" fill="#2a50b8"/><circle cx="54.8" cy="13.3" r="2.2" fill="#38a0d8"/><circle cx="19.1" cy="11.3" r="2.5" fill="#5a3a90"/><circle cx="75.6" cy="20.2" r="1.2" fill="#3a2a70"/><circle cx="7.1" cy="36.6" r="1.3" fill="#e8c060"/><circle cx="64.2" cy="46.5" r="1.7" fill="#c8e0dc"/><circle cx="11.0" cy="3.3" r="1.9" fill="#e07030"/><circle cx="109.5" cy="2.5" r="1.3" fill="#2a50b8"/><circle cx="46.5" cy="2.8" r="1.8" fill="#2a50b8"/><circle cx="35.8" cy="2.4" r="2.6" fill="#d03a24"/><circle cx="21.0" cy="23.9" r="1.9" fill="#e8c060"/><circle cx="9.9" cy="14.8" r="2.0" fill="#d03a24"/><circle cx="107.8" cy="28.1" r="1.5" fill="#e07030"/><circle cx="2.0" cy="25.4" r="2.0" fill="#e8c060"/><circle cx="44.1" cy="29.4" r="2.5" fill="#5a3a90"/><circle cx="36.0" cy="21.1" r="1.5" fill="#38a0d8"/><circle cx="13.5" cy="14.7" r="2.3" fill="#d03a24"/><circle cx="95.9" cy="14.7" r="1.3" fill="#d03a24"/><circle cx="28.6" cy="4.0" r="2.0" fill="#e8c060"/><circle cx="28.7" cy="2.9" r="1.3" fill="#5a3a90"/><circle cx="23.4" cy="13.4" r="1.3" fill="#2a50b8"/><circle cx="49.2" cy="14.8" r="2.0" fill="#38a0d8"/><circle cx="104.8" cy="30.7" r="2.0" fill="#38a0d8"/><circle cx="51.7" cy="38.4" r="2.5" fill="#5a3a90"/><circle cx="85.2" cy="33.0" r="2.3" fill="#2a50b8"/><circle cx="44.7" cy="6.1" r="1.4" fill="#d03a24"/><circle cx="30.7" cy="31.8" r="1.3" fill="#2a50b8"/><circle cx="89.4" cy="26.2" r="1.3" fill="#d03a24"/><circle cx="15.2" cy="16.8" r="2.5" fill="#e07030"/><circle cx="71.6" cy="10.9" r="1.7" fill="#e8c060"/><circle cx="38.7" cy="0.6" r="2.4" fill="#c8e0dc"/><circle cx="85.0" cy="4.5" r="1.4" fill="#c8e0dc"/><circle cx="83.0" cy="21.0" r="2.3" fill="#3a2a70"/><circle cx="13.8" cy="14.9" r="1.8" fill="#e07030"/><circle cx="50.8" cy="20.7" r="2.5" fill="#38a0d8"/><circle cx="62.3" cy="45.6" r="1.3" fill="#c8e0dc"/><circle cx="95.3" cy="19.7" r="2.6" fill="#d03a24"/><circle cx="3.8" cy="27.1" r="2.4" fill="#e8c060"/><circle cx="45.9" cy="10.1" r="1.5" fill="#2a50b8"/><circle cx="65.8" cy="16.8" r="1.5" fill="#38a0d8"/><circle cx="41.2" cy="11.7" r="2.4" fill="#3a2a70"/><circle cx="99.4" cy="29.1" r="1.4" fill="#e8c060"/><circle cx="97.3" cy="23.0" r="1.4" fill="#d03a24"/><circle cx="11.6" cy="33.7" r="1.5" fill="#e07030"/><circle cx="93.3" cy="15.2" r="2.4" fill="#5a3a90"/><circle cx="72.9" cy="37.6" r="1.2" fill="#2a50b8"/><circle cx="59.9" cy="27.6" r="1.7" fill="#d03a24"/><circle cx="37.1" cy="1.3" r="1.7" fill="#2a50b8"/><circle cx="55.7" cy="33.1" r="2.6" fill="#e8c060"/><circle cx="95.4" cy="43.4" r="2.1" fill="#5a3a90"/><circle cx="62.8" cy="37.5" r="2.0" fill="#2a50b8"/><circle cx="79.5" cy="24.5" r="1.3" fill="#2a50b8"/><circle cx="10.2" cy="16.7" r="2.3" fill="#c8e0dc"/><circle cx="83.6" cy="14.4" r="1.6" fill="#e07030"/><circle cx="83.8" cy="3.4" r="2.1" fill="#38a0d8"/><circle cx="112.0" cy="42.2" r="2.4" fill="#5a3a90"/><circle cx="86.4" cy="28.7" r="1.9" fill="#2a50b8"/><circle cx="104.8" cy="11.2" r="2.0" fill="#3a2a70"/><circle cx="46.0" cy="0.1" r="1.4" fill="#2a50b8"/><circle cx="76.4" cy="42.3" r="2.1" fill="#e07030"/><circle cx="45.2" cy="5.1" r="2.0" fill="#5a3a90"/><circle cx="83.7" cy="17.6" r="1.5" fill="#e07030"/><circle cx="35.8" cy="12.6" r="2.5" fill="#c8e0dc"/><circle cx="19.6" cy="29.7" r="1.5" fill="#38a0d8"/><circle cx="7.3" cy="26.6" r="2.4" fill="#38a0d8"/><circle cx="85.2" cy="19.6" r="1.9" fill="#e8c060"/><circle cx="105.9" cy="14.2" r="2.0" fill="#2a50b8"/><circle cx="113.1" cy="8.8" r="1.4" fill="#d03a24"/><circle cx="65.8" cy="28.4" r="1.5" fill="#d03a24"/><circle cx="69.6" cy="30.4" r="2.2" fill="#5a3a90"/><circle cx="7.2" cy="22.8" r="2.5" fill="#e07030"/><circle cx="37.3" cy="40.0" r="2.5" fill="#5a3a90"/><circle cx="26.8" cy="32.7" r="1.9" fill="#e07030"/><circle cx="11.8" cy="9.1" r="1.3" fill="#d03a24"/><circle cx="17.8" cy="28.9" r="2.3" fill="#d03a24"/><circle cx="86.1" cy="38.4" r="2.2" fill="#38a0d8"/><circle cx="108.1" cy="45.0" r="2.6" fill="#5a3a90"/><circle cx="12.1" cy="4.8" r="1.5" fill="#d03a24"/><circle cx="43.8" cy="21.6" r="2.2" fill="#5a3a90"/><circle cx="9.8" cy="19.0" r="1.7" fill="#c8e0dc"/><circle cx="13.8" cy="28.1" r="2.2" fill="#2a50b8"/><circle cx="58.0" cy="45.2" r="1.3" fill="#3a2a70"/><circle cx="88.9" cy="33.9" r="1.4" fill="#2a50b8"/><circle cx="56.0" cy="16.6" r="2.5" fill="#38a0d8"/><circle cx="44.7" cy="13.7" r="2.2" fill="#c8e0dc"/><circle cx="92.3" cy="27.1" r="1.7" fill="#2a50b8"/><circle cx="99.2" cy="24.4" r="1.8" fill="#d03a24"/><circle cx="27.8" cy="31.3" r="1.6" fill="#d03a24"/><circle cx="11.2" cy="22.4" r="2.0" fill="#3a2a70"/><circle cx="45.2" cy="43.9" r="1.7" fill="#d03a24"/><circle cx="94.9" cy="0.2" r="1.7" fill="#38a0d8"/><circle cx="1.9" cy="11.8" r="1.7" fill="#e8c060"/><circle cx="60.5" cy="2.5" r="2.6" fill="#2a50b8"/><circle cx="51.8" cy="22.2" r="1.6" fill="#d03a24"/><circle cx="111.7" cy="32.3" r="1.3" fill="#c8e0dc"/><circle cx="45.9" cy="36.6" r="2.0" fill="#e8c060"/><circle cx="105.6" cy="30.3" r="1.3" fill="#5a3a90"/><circle cx="2.8" cy="36.2" r="2.4" fill="#e8c060"/><circle cx="96.6" cy="43.0" r="2.6" fill="#2a50b8"/><circle cx="88.5" cy="41.9" r="2.3" fill="#d03a24"/><circle cx="49.4" cy="45.7" r="1.5" fill="#3a2a70"/><circle cx="49.3" cy="12.7" r="1.6" fill="#e8c060"/><circle cx="78.0" cy="5.8" r="1.8" fill="#d03a24"/><circle cx="8.6" cy="17.9" r="2.4" fill="#e07030"/><circle cx="23.0" cy="0.9" r="2.5" fill="#38a0d8"/><circle cx="70.1" cy="6.4" r="2.5" fill="#2a50b8"/><circle cx="109.7" cy="1.5" r="1.8" fill="#d03a24"/><circle cx="31.2" cy="35.4" r="2.3" fill="#2a50b8"/><circle cx="17.8" cy="24.4" r="2.2" fill="#3a2a70"/><circle cx="10.5" cy="5.2" r="1.7" fill="#5a3a90"/><circle cx="43.1" cy="22.5" r="2.6" fill="#c8e0dc"/><circle cx="28.2" cy="26.7" r="2.0" fill="#2a50b8"/><circle cx="85.6" cy="6.3" r="2.2" fill="#e8c060"/><circle cx="1.0" cy="36.2" r="1.9" fill="#e8c060"/><circle cx="71.4" cy="37.3" r="1.9" fill="#d03a24"/><circle cx="4.5" cy="18.1" r="1.2" fill="#2a50b8"/><circle cx="34.8" cy="21.2" r="2.5" fill="#5a3a90"/><circle cx="43.3" cy="24.9" r="2.5" fill="#5a3a90"/><circle cx="111.1" cy="46.4" r="1.4" fill="#2a50b8"/><circle cx="109.0" cy="3.6" r="2.2" fill="#e8c060"/><circle cx="61.9" cy="18.3" r="1.6" fill="#e07030"/><circle cx="64.6" cy="39.0" r="1.7" fill="#d03a24"/><circle cx="57.8" cy="26.6" r="1.8" fill="#d03a24"/><circle cx="7.0" cy="4.1" r="1.4" fill="#2a50b8"/><circle cx="113.2" cy="12.4" r="2.3" fill="#2a50b8"/><circle cx="86.7" cy="12.3" r="2.1" fill="#38a0d8"/><circle cx="45.5" cy="29.6" r="1.6" fill="#2a50b8"/><circle cx="102.6" cy="20.6" r="1.4" fill="#e07030"/><circle cx="16.1" cy="2.4" r="2.0" fill="#38a0d8"/><circle cx="1.1" cy="2.0" r="1.9" fill="#38a0d8"/><circle cx="101.9" cy="1.9" r="1.4" fill="#c8e0dc"/><circle cx="84.4" cy="28.7" r="1.5" fill="#c8e0dc"/><circle cx="111.0" cy="5.2" r="2.2" fill="#d03a24"/><circle cx="10.9" cy="3.1" r="2.1" fill="#e8c060"/><circle cx="104.4" cy="33.9" r="2.1" fill="#d03a24"/><circle cx="98.7" cy="5.7" r="1.6" fill="#38a0d8"/><circle cx="34.9" cy="0.1" r="1.9" fill="#38a0d8"/><circle cx="105.5" cy="21.9" r="1.5" fill="#d03a24"/><circle cx="30.8" cy="44.5" r="1.3" fill="#d03a24"/><circle cx="41.3" cy="3.7" r="2.1" fill="#e8c060"/><circle cx="76.1" cy="8.2" r="1.9" fill="#d03a24"/><circle cx="80.4" cy="21.0" r="2.5" fill="#c8e0dc"/><circle cx="17.0" cy="12.6" r="2.0" fill="#e8c060"/><circle cx="105.3" cy="26.1" r="1.8" fill="#5a3a90"/><circle cx="91.8" cy="39.3" r="1.4" fill="#2a50b8"/><circle cx="30.3" cy="16.8" r="1.6" fill="#e07030"/><circle cx="73.6" cy="30.1" r="1.4" fill="#3a2a70"/><circle cx="90.1" cy="15.8" r="2.1" fill="#d03a24"/><circle cx="98.8" cy="27.4" r="2.6" fill="#d03a24"/><circle cx="44.9" cy="29.9" r="1.6" fill="#5a3a90"/><circle cx="47.8" cy="15.5" r="1.3" fill="#d03a24"/><circle cx="83.9" cy="19.3" r="1.3" fill="#e07030"/><circle cx="35.3" cy="8.5" r="2.3" fill="#3a2a70"/><circle cx="104.9" cy="23.8" r="1.8" fill="#d03a24"/><circle cx="26.5" cy="1.3" r="1.6" fill="#c8e0dc"/><circle cx="12.6" cy="24.0" r="2.5" fill="#e07030"/><circle cx="54.5" cy="4.8" r="1.4" fill="#38a0d8"/><circle cx="62.9" cy="3.9" r="2.0" fill="#3a2a70"/><circle cx="51.2" cy="12.8" r="2.6" fill="#c8e0dc"/><circle cx="50.1" cy="9.8" r="2.5" fill="#c8e0dc"/><circle cx="44.7" cy="29.8" r="1.7" fill="#e07030"/><circle cx="94.9" cy="24.9" r="1.3" fill="#d03a24"/><circle cx="109.9" cy="21.9" r="2.5" fill="#e8c060"/><circle cx="67.2" cy="23.5" r="2.2" fill="#2a50b8"/><circle cx="30.0" cy="22.1" r="2.0" fill="#38a0d8"/><circle cx="15.7" cy="9.5" r="2.2" fill="#5a3a90"/><circle cx="12.0" cy="46.9" r="1.4" fill="#d03a24"/><circle cx="10.5" cy="21.0" r="2.4" fill="#c8e0dc"/><circle cx="19.1" cy="32.8" r="2.0" fill="#d03a24"/><circle cx="29.5" cy="16.7" r="2.2" fill="#d03a24"/><circle cx="14.3" cy="35.9" r="2.0" fill="#2a50b8"/><circle cx="74.8" cy="23.0" r="2.5" fill="#e07030"/><circle cx="33.0" cy="15.7" r="1.4" fill="#e07030"/><circle cx="49.1" cy="19.5" r="1.4" fill="#3a2a70"/><circle cx="76.6" cy="35.6" r="1.2" fill="#5a3a90"/><circle cx="110.4" cy="14.7" r="2.1" fill="#e07030"/><circle cx="49.2" cy="39.4" r="1.7" fill="#5a3a90"/><circle cx="85.6" cy="23.7" r="2.1" fill="#5a3a90"/><circle cx="93.1" cy="7.5" r="1.2" fill="#e8c060"/><circle cx="92.5" cy="36.3" r="1.3" fill="#e07030"/></g>
 <ellipse cx="58" cy="1" rx="26" ry="6" fill="#1a1410" filter="url(#b1)"/>
 <g fill="#e2c462" filter="url(#b05)"><circle cx="42" cy="6" r="3"/><circle cx="52" cy="4" r="2.5"/><circle cx="64" cy="4" r="2.5"/><circle cx="74" cy="6" r="3"/><circle cx="30" cy="10" r="2.5"/><circle cx="86" cy="10" r="2.5"/></g>
 <g fill="#cc3a26" filter="url(#b1)" opacity="0.9"><ellipse cx="10" cy="36" rx="10" ry="9"/><ellipse cx="107" cy="36" rx="10" ry="9"/><ellipse cx="58" cy="24" rx="4" ry="6"/><ellipse cx="36" cy="40" rx="5" ry="4"/><ellipse cx="80" cy="40" rx="5" ry="4"/></g>
 <g fill="#d0e4e0" filter="url(#b1)" opacity="0.85"><ellipse cx="30" cy="28" rx="6" ry="5"/><ellipse cx="86" cy="28" rx="6" ry="5"/><circle cx="18" cy="10" r="4"/><circle cx="99" cy="10" r="4"/><ellipse cx="58" cy="42" rx="6" ry="3"/></g>
</symbol>
</defs></svg>
<svg style="left:260px;top:151px" width="88" height="87"><use href="#bt"/></svg>
<div class="a" style="left:260px;top:151px;width:88px;height:87px;border:1px solid #3a3630"></div>
<svg style="left:404px;top:151px" width="117" height="87"><use href="#emb"/></svg>
<div class="a" style="left:404px;top:151px;width:117px;height:87px;border:1px solid #3a3a40"></div>
<svg style="left:564px;top:151px" width="116" height="87"><use href="#light"/></svg>
<div class="a" style="left:564px;top:151px;width:116px;height:87px;border:1px solid #3a3630"></div>
<svg style="left:245px;top:281px" width="116" height="87"><use href="#mask"/></svg>
<div class="a" style="left:245px;top:281px;width:116px;height:87px;border:1px solid #2a3a5a"></div>
<svg style="left:405px;top:281px" width="116" height="87"><use href="#pastel"/></svg>
<div class="a" style="left:405px;top:281px;width:116px;height:87px;border:1px solid #202020"></div>
<svg style="left:564px;top:281px" width="116" height="87"><use href="#surg"/></svg>
<div class="a" style="left:564px;top:281px;width:116px;height:87px;border:1px solid #202030"></div>
<svg style="left:259px;top:411px" width="89" height="47"><use href="#r3a"/></svg>
<div class="a" style="left:259px;top:411px;width:89px;height:48px;border:1px solid #2a2420;border-bottom:none"></div>
<svg style="left:404px;top:411px" width="118" height="47"><use href="#r3b"/></svg>
<div class="a" style="left:404px;top:411px;width:118px;height:48px;border:1px solid #3a4030;border-bottom:none"></div>
<svg style="left:564px;top:411px" width="117" height="47"><use href="#r3c"/></svg>
<div class="a" style="left:564px;top:411px;width:117px;height:48px;border:1px solid #303030;border-bottom:none"></div>

<div class="a" style="left:224px;top:458px;width:513px;height:1px;background:#a3a3a3"></div>
<!-- grid scrollbar -->
<div class="a" style="left:721px;top:149px;width:16px;height:309px;background:#f0f0f0"></div>
<div class="a" style="left:722px;top:166px;width:14px;height:231px;background:#cdcdcd"></div>
<svg style="left:726px;top:157px" width="7" height="4" viewBox="0 0 7 4"><path d="M0.5 3.5L3.5 0.6L6.5 3.5" fill="none" stroke="#404040" stroke-width="1.3"/></svg>
<svg style="left:726px;top:448px" width="7" height="4" viewBox="0 0 7 4"><path d="M0.5 0.5L3.5 3.4L6.5 0.5" fill="none" stroke="#404040" stroke-width="1.3"/></svg>
<!-- text panel -->
<div class="a" style="left:12px;top:463px;width:530px;height:139px;background:#f0f0f0;border:1px solid #a3a3a3"></div>
<div class="a" style="left:525px;top:464px;width:16px;height:121px;background:#f0f0f0;border-left:1px solid #f8f8f8"></div>
<div class="a" style="left:526px;top:481px;width:14px;height:16px;background:#cdcdcd"></div>
<svg style="left:530px;top:471px" width="7" height="4" viewBox="0 0 7 4"><path d="M0.5 3.5L3.5 0.6L6.5 3.5" fill="none" stroke="#404040" stroke-width="1.3"/></svg>
<svg style="left:530px;top:575px" width="7" height="4" viewBox="0 0 7 4"><path d="M0.5 0.5L3.5 3.4L6.5 0.5" fill="none" stroke="#404040" stroke-width="1.3"/></svg>
<div class="a" style="left:13px;top:585px;width:512px;height:16px;background:#f0f0f0;border-top:1px solid #f8f8f8"></div>
<svg style="left:19px;top:590px" width="4" height="7" viewBox="0 0 4 7"><path d="M3.5 0.5L0.6 3.5L3.5 6.5" fill="none" stroke="#a8a8a8" stroke-width="1.1"/></svg>
<svg style="left:515px;top:590px" width="4" height="7" viewBox="0 0 4 7"><path d="M0.5 0.5L3.4 3.5L0.5 6.5" fill="none" stroke="#a8a8a8" stroke-width="1.1"/></svg>
<!-- preview pane -->
<div class="a" style="left:548px;top:464px;width:190px;height:138px;background:#f8f8f8"></div>
<div class="a" style="left:549px;top:465px;width:188px;height:136px;background:#939393"></div>
<svg style="left:585px;top:489px" width="116" height="87"><use href="#surg"/></svg>
<div class="a" style="left:584px;top:488px;width:118px;height:89px;border:1px solid #6a6a5a"></div>

<!-- status bar -->
<div class="a" style="left:166px;top:604px;width:1px;height:17px;background:#d7d7d7"></div>
<div class="a" style="left:398px;top:604px;width:1px;height:17px;background:#d7d7d7"></div>
<svg style="left:727px;top:612px" width="10" height="10" viewBox="0 0 10 10"><g fill="#a0a0a0"><rect x="7" y="1" width="1.2" height="1.2"/><rect x="4" y="4" width="1.2" height="1.2"/><rect x="7" y="4" width="1.2" height="1.2"/><rect x="1" y="7" width="1.2" height="1.2"/><rect x="4" y="7" width="1.2" height="1.2"/><rect x="7" y="7" width="1.2" height="1.2"/></g></svg>
<svg width="0" height="0" style="position:absolute;left:0;top:0"><defs>
<linearGradient id="gBlue" x1="0" y1="0" x2="1" y2="1"><stop offset="0" stop-color="#b8e8ff"/><stop offset="0.5" stop-color="#4aa8ec"/><stop offset="1" stop-color="#1458b8"/></linearGradient>
<linearGradient id="gTile" x1="0" y1="0" x2="0" y2="1"><stop offset="0" stop-color="#60b8f4"/><stop offset="1" stop-color="#1a5cb8"/></linearGradient>
<symbol id="docs" viewBox="0 0 16 16">
 <path d="M0.5 0.5 H6.5 L8 2 V14.5 H0.5 Z" fill="#f4f6f8" stroke="#9aa0a8" stroke-width="1"/>
 <path d="M2.8 1.5 H9 L10.8 3.3 V15 H2.8 Z" fill="#e8f0f8" stroke="#6a7080" stroke-width="1"/>
 <path d="M5.5 3.5 H12.5 L15.5 6.3 V15.5 H5.5 Z" fill="#ffffff" stroke="#3a3e48" stroke-width="1.1"/>
 <rect x="7.2" y="5.5" width="6.6" height="6.8" fill="url(#gBlue)"/>
</symbol>
<symbol id="pages" viewBox="0 0 16 16">
 <path d="M0.5 0.5 H6.5 L8.5 2.5 V13 H0.5 Z" fill="#eef3f8" stroke="#a0a8b4" stroke-width="1"/>
 <path d="M3 2 H9 L11 4 V14.5 H3 Z" fill="#e4eef8" stroke="#707888" stroke-width="1"/>
 <path d="M5.5 4 H11.5 L15 7.5 V15.5 H5.5 Z" fill="#ffffff" stroke="#3a3e48" stroke-width="1.1"/>
 <path d="M11.5 4 V7.5 H15" fill="#3a3e48" stroke="#3a3e48" stroke-width="0.8"/>
 <rect x="7" y="8" width="4" height="5" fill="#d6e8f6"/>
</symbol>
</defs></svg>
<!-- title icon -->
<svg style="left:15px;top:18px" width="18" height="18" viewBox="0 0 18 18">
 <path d="M10 9.5 L13.5 7.5 L17 9.5 L16.5 14 L12.5 16.5 L10 14 Z" fill="#f2d060" stroke="#8a6a30" stroke-width="0.7"/>
 <circle cx="14" cy="12" r="1.5" fill="#e07830"/>
 <path d="M5 12.5 L8.5 11.5 L10 15.5 L6 16.5 Z" fill="#d8e0a0" stroke="#6a5a30" stroke-width="0.7"/>
 <circle cx="6.6" cy="6.5" r="4.4" fill="#f4f6f8" stroke="#111" stroke-width="1.4"/>
 <path d="M5 6 H8" stroke="#b0b8c8" stroke-width="1"/>
 <path d="M9.3 10 L12 16" stroke="#111" stroke-width="1.6"/>
</svg>
<!-- library only icon -->
<svg style="left:39px;top:74px" width="17" height="16" viewBox="0 0 16 16"><use href="#pages"/></svg>
<!-- view grid icon -->
<svg style="left:96px;top:75px" width="14" height="14" viewBox="0 0 14 14">
 <g stroke="#1a4a90" stroke-width="0.6"><rect x="0.3" y="0.3" width="6" height="6" rx="0.8" fill="url(#gTile)"/><rect x="7.3" y="0.3" width="6" height="6" rx="0.8" fill="url(#gTile)"/><rect x="0.3" y="7.3" width="6" height="6" rx="0.8" fill="url(#gTile)"/><rect x="7.3" y="7.3" width="6" height="6" rx="0.8" fill="url(#gTile)"/></g>
 <g fill="#c8ecff" opacity="0.8"><rect x="1.5" y="1.5" width="2" height="1.5"/><rect x="8.5" y="1.5" width="2" height="1.5"/><rect x="1.5" y="8.5" width="2" height="1.5"/><rect x="8.5" y="8.5" width="2" height="1.5"/></g>
</svg>
<!-- list icon -->
<svg style="left:121px;top:75px" width="14" height="14" viewBox="0 0 14 14">
 <g fill="#5a6888"><rect x="0" y="0" width="2" height="2.5"/><rect x="0" y="3.5" width="2" height="2.5"/><rect x="0" y="7" width="2" height="2.5"/><rect x="0" y="10.5" width="2" height="2.5"/></g>
 <g fill="#b8bcc4"><rect x="4" y="0.5" width="3.5" height="1"/><rect x="9" y="0.5" width="3.5" height="1"/><rect x="4" y="2.5" width="3.5" height="1"/><rect x="9" y="2.5" width="3.5" height="1"/><rect x="4" y="4.5" width="3.5" height="1"/><rect x="9" y="4.5" width="3.5" height="1"/></g>
 <g fill="#6a6a6a"><rect x="4" y="7.5" width="3.5" height="1"/><rect x="9" y="7.5" width="3.5" height="1"/><rect x="4" y="9.5" width="3.5" height="1"/><rect x="9" y="9.5" width="3.5" height="1"/><rect x="4" y="11.5" width="3.5" height="1"/><rect x="9" y="11.5" width="3.5" height="1"/></g>
</svg>
<!-- combo icon -->
<svg style="left:166px;top:72px" width="16" height="16" viewBox="0 0 16 16"><use href="#docs"/></svg>
<!-- find entries icon -->
<svg style="left:352px;top:69px" width="26" height="28" viewBox="0 0 26 28">
 <rect x="0.8" y="0.8" width="10" height="10" rx="1.5" fill="url(#gTile)" stroke="#23407a" stroke-width="1"/>
 <rect x="14.5" y="0.8" width="10" height="10" rx="1.5" fill="#eef2f8" stroke="#6a7080" stroke-width="1"/>
 <path d="M18 3 C16.8 4.5 16.8 7 18 8.5 M21.5 3 C22.7 4.5 22.7 7 21.5 8.5" fill="none" stroke="#283a8a" stroke-width="1.1"/>
 <rect x="0.8" y="14" width="10" height="10" rx="1.5" fill="url(#gTile)" stroke="#23407a" stroke-width="1"/>
 <path d="M6 24 L10.8 24 L10.8 19" fill="none" stroke="#d09030" stroke-width="1.5"/>
 <rect x="14.5" y="14" width="10" height="10" rx="1.5" fill="#dceaf6" stroke="#6a7080" stroke-width="1"/>
 <rect x="18.5" y="16" width="4" height="4" fill="#e03a20"/>
 <circle cx="12.4" cy="11.4" r="6.6" fill="#f4f8fc" stroke="#0e0e0e" stroke-width="1.5"/>
 <g fill="#c8d8e8"><circle cx="10" cy="9" r="1.2"/><circle cx="15" cy="9" r="1.2"/><circle cx="10" cy="14" r="1.2"/><circle cx="15" cy="14" r="1.2"/></g>
 <path d="M16.5 17 L21.5 27" stroke="#0e0e0e" stroke-width="2"/>
</svg>
<!-- folder up -->
<svg style="left:712px;top:127px" width="16" height="15" viewBox="0 0 16 15">
 <path d="M0.6 2.2 Q0.6 1.2 1.6 1.2 H6 L7 2.2 H14.2 Q15.2 2.2 15.2 3.2 V13.3 Q15.2 14.3 14.2 14.3 H1.6 Q0.6 14.3 0.6 13.3 Z" fill="#f4dc88" stroke="#8a7a58" stroke-width="1"/>
 <path d="M6.5 11 V6.5 M4.3 7.8 L6.5 5.2 L8.7 7.8" fill="none" stroke="#0a0a0a" stroke-width="1.8"/>
 <path d="M6.5 11 H11.5" stroke="#0a0a0a" stroke-width="1.8"/>
</svg>
<!-- tree icons -->
<svg style="left:14px;top:151px" width="16" height="16" viewBox="0 0 16 16"><use href="#pages"/></svg>
<svg style="left:31px;top:171px" width="16" height="16" viewBox="0 0 16 16"><use href="#docs"/></svg>
<svg style="left:31px;top:190.5px" width="16" height="16" viewBox="0 0 16 16"><use href="#docs"/></svg>
<svg style="left:31px;top:210px" width="16" height="16" viewBox="0 0 16 16"><use href="#docs"/></svg>
<svg style="left:31px;top:229.5px" width="16" height="16" viewBox="0 0 16 16"><use href="#docs"/></svg>
<svg style="left:31px;top:249px" width="16" height="16" viewBox="0 0 16 16"><use href="#docs"/></svg>
<svg style="left:22px;top:167px" width="10" height="92" viewBox="0 0 10 92">
 <g stroke="#b4b4b4" stroke-width="1" stroke-dasharray="1 1" fill="none">
  <path d="M0.5 0 V90"/><path d="M1 11.5 H9"/><path d="M1 31 H9"/><path d="M1 50.5 H9"/><path d="M1 70 H9"/><path d="M1 89.5 H9"/>
 </g>
</svg>

<div class="t" style="left:35.0px;top:22.5px;letter-spacing:-0.369px">Browsing - Layer Examples.upr</div>
<div class="t" style="left:14.2px;top:45.1px;letter-spacing:-0.579px">File</div>
<div class="t" style="left:38.8px;top:45.1px;letter-spacing:-0.493px">Edit</div>
<div class="t" style="left:64.6px;top:45.1px;letter-spacing:-0.231px">View</div>
<div class="t" style="left:96.0px;top:45.1px;letter-spacing:-0.096px">Window</div>
<div class="t" style="left:145.2px;top:45.1px;letter-spacing:-0.160px">Help</div>
<div class="t" style="left:15.5px;top:103.7px;letter-spacing:-0.299px">Library Only</div>
<div class="t" style="left:102.1px;top:103.7px;letter-spacing:-0.231px">View</div>
<div class="t" style="left:209.5px;top:103.5px;letter-spacing:-0.443px">File Types</div>
<div class="t" style="left:334.1px;top:103.5px;letter-spacing:-0.366px">Find Entries</div>
<div class="t" style="left:184.5px;top:76.0px;letter-spacing:-0.499px">Parameter Files</div>
<div class="t" style="left:14.0px;top:128.4px;letter-spacing:-0.388px">Location:</div>
<div class="t" style="left:68.9px;top:128.4px;letter-spacing:-0.327px">Documents\Ultra Fractal 6\Parameters\Layer Examples.upr</div>
<div class="t" style="left:32.3px;top:154.5px;letter-spacing:-0.413px">Library</div>
<div class="t" style="left:49.0px;top:173.9px;letter-spacing:-0.251px">Animation Examples.upr</div>
<div class="t" style="left:49.0px;top:193.3px;letter-spacing:-0.271px">Deep Zooming Examples.upr</div>
<div class="t" style="left:49.0px;top:212.7px;letter-spacing:-0.470px">Examples.upr</div>
<div class="t" style="left:49.3px;top:232.1px;letter-spacing:-0.466px">Layer Examples.upr</div>
<div class="t" style="left:49.0px;top:251.5px;letter-spacing:-0.299px">My Fractals.upr</div>
<div class="t" style="left:247.1px;top:243.4px;letter-spacing:-0.450px">Black and Tan Fantasy</div>
<div class="t" style="left:434.8px;top:243.4px;letter-spacing:-0.445px">Embossing</div>
<div class="t" style="left:600.8px;top:243.4px;letter-spacing:0.052px">Lighting</div>
<div class="t" style="left:258.7px;top:374.3px;letter-spacing:-0.308px">Masking Example</div>
<div class="t" style="left:406.1px;top:374.3px;letter-spacing:-0.155px">Pastel from the Inside</div>
<div class="t" style="left:602.4px;top:374.3px;letter-spacing:-0.336px">Surgery</div>
<div class="t" style="left:16.4px;top:469.0px;letter-spacing:-0.332px">Surgery {</div>
<div class="t" style="left:16.4px;top:484.0px;letter-spacing:-0.273px">fractal:</div>
<div class="t" style="left:23.0px;top:499.1px;letter-spacing:-0.038px">title=&quot;Surgery&quot; width=640 height=480 layers=3</div>
<div class="t" style="left:23.0px;top:514.2px;letter-spacing:-0.283px">credits=&quot;Frederik Slijkerman;7/3/2002&quot;</div>
<div class="t" style="left:16.4px;top:529.3px;letter-spacing:-0.389px">layer:</div>
<div class="t" style="left:23.0px;top:544.7px;letter-spacing:-0.110px">method=linear caption=&quot;Layer 2&quot; opacity=36 transparent=yes</div>
<div class="t" style="left:16.4px;top:560.1px;letter-spacing:-0.109px">mapping:</div>
<div class="t" style="left:16.3px;top:607.5px;letter-spacing:-0.282px">1 item(s) selected</div>
</body></html>
